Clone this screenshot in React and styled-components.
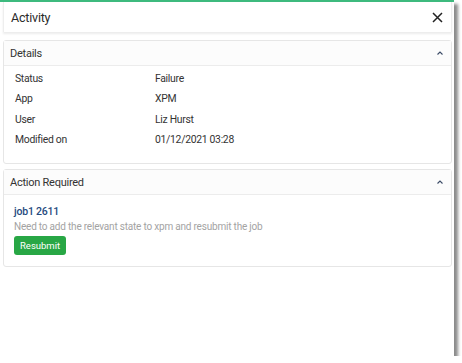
import { Fragment } from 'react';
import styled, { createGlobalStyle } from 'styled-components';

const GlobalStyle = createGlobalStyle`
  html, body {
    margin: 0;
    padding: 0;
    background: #ffffff;
  }

  body {
    font-family: Roboto, "Open Sans", sans-serif;
    color: #333;
  }
`;

const Frame = styled.div`
  width: 454px;
  height: 356px;
  box-sizing: border-box;
  background: #fff;
  border-top: 2px solid #3dba7e;
  box-shadow: 4px 4px 3px rgba(0, 0, 0, 0.45);
  padding: 0 2px 0 3px;
  display: flex;
  flex-direction: column;
`;

const TitleBar = styled.div`
  display: flex;
  align-items: center;
  justify-content: space-between;
  height: 30px;
  padding: 0 8px 0 7px;
  border-left: 1px solid #eee;
  border-right: 1px solid #eee;
  box-shadow: 0 2px 2px rgba(0, 0, 0, 0.08);
  margin-bottom: 8px;
`;

const Title = styled.span`
  font-size: 12.5px;
  letter-spacing: -0.2px;
  color: #2a2a2a;
`;

const CloseButton = styled.button`
  border: none;
  background: none;
  padding: 0;
  display: flex;
  cursor: pointer;
`;

const Card = styled.section`
  border: 1px solid #e6e6e6;
  border-radius: 3px;
  margin-bottom: 5px;
`;

const CardHeader = styled.div`
  display: flex;
  align-items: center;
  justify-content: space-between;
  height: 24px;
  padding: 0 7px 0 6px;
  background: #fcfcfc;
  border-bottom: 1px solid #ececec;
  font-size: 11px;
  letter-spacing: -0.25px;
  color: #333;
`;

const DetailsBody = styled.div`
  display: grid;
  grid-template-columns: 140px 1fr;
  row-gap: 4px;
  padding: 5px 11px 15px;
  font-size: 10.4px;
  letter-spacing: -0.3px;
  line-height: 16.3px;
  color: #333;
`;

const ActionBody = styled.div`
  padding: 9px 10px 11px;
  display: flex;
  flex-direction: column;
  align-items: flex-start;
`;

const JobTitle = styled.div`
  font-size: 10.5px;
  font-weight: 500;
  letter-spacing: -0.2px;
  line-height: 16px;
  color: #264a7e;
`;

const JobText = styled.div`
  font-size: 10px;
  letter-spacing: -0.2px;
  line-height: 14px;
  color: #a3a3a3;
  margin-bottom: 2px;
`;

const ResubmitButton = styled.button`
  font-family: inherit;
  font-size: 9.5px;
  color: #fff;
  background: #28a745;
  border: none;
  border-radius: 3px;
  height: 19px;
  padding: 0 6px;
`;

const Chevron = () => (
  <svg width="8" height="6" viewBox="0 0 8 6">
    <path d="M1.5 4.5 L4 2 L6.5 4.5" fill="none" stroke="#3a4a66" strokeWidth="1.1" />
  </svg>
);

const details = [
  ['Status', 'Failure'],
  ['App', 'XPM'],
  ['User', 'Liz Hurst'],
  ['Modified on', '01/12/2021 03:28'],
];

export default function App() {
  return (
    <>
      <GlobalStyle />
      <Frame>
        <TitleBar>
          <Title>Activity</Title>
          <CloseButton aria-label="close">
            <svg width="11" height="11" viewBox="0 0 11 11">
              <path d="M1 1 L10 10 M10 1 L1 10" stroke="#222" strokeWidth="1.5" />
            </svg>
          </CloseButton>
        </TitleBar>

        <Card>
          <CardHeader>
            <span>Details</span>
            <Chevron />
          </CardHeader>
          <DetailsBody>
            {details.map(([label, value]) => (
              <Fragment key={label}>
                <span>{label}</span>
                <span>{value}</span>
              </Fragment>
            ))}
          </DetailsBody>
        </Card>

        <Card>
          <CardHeader>
            <span>Action Required</span>
            <Chevron />
          </CardHeader>
          <ActionBody>
            <JobTitle>job1 2611</JobTitle>
            <JobText>Need to add the relevant state to xpm and resubmit the job</JobText>
            <ResubmitButton>Resubmit</ResubmitButton>
          </ActionBody>
        </Card>
      </Frame>
    </>
  );
}
